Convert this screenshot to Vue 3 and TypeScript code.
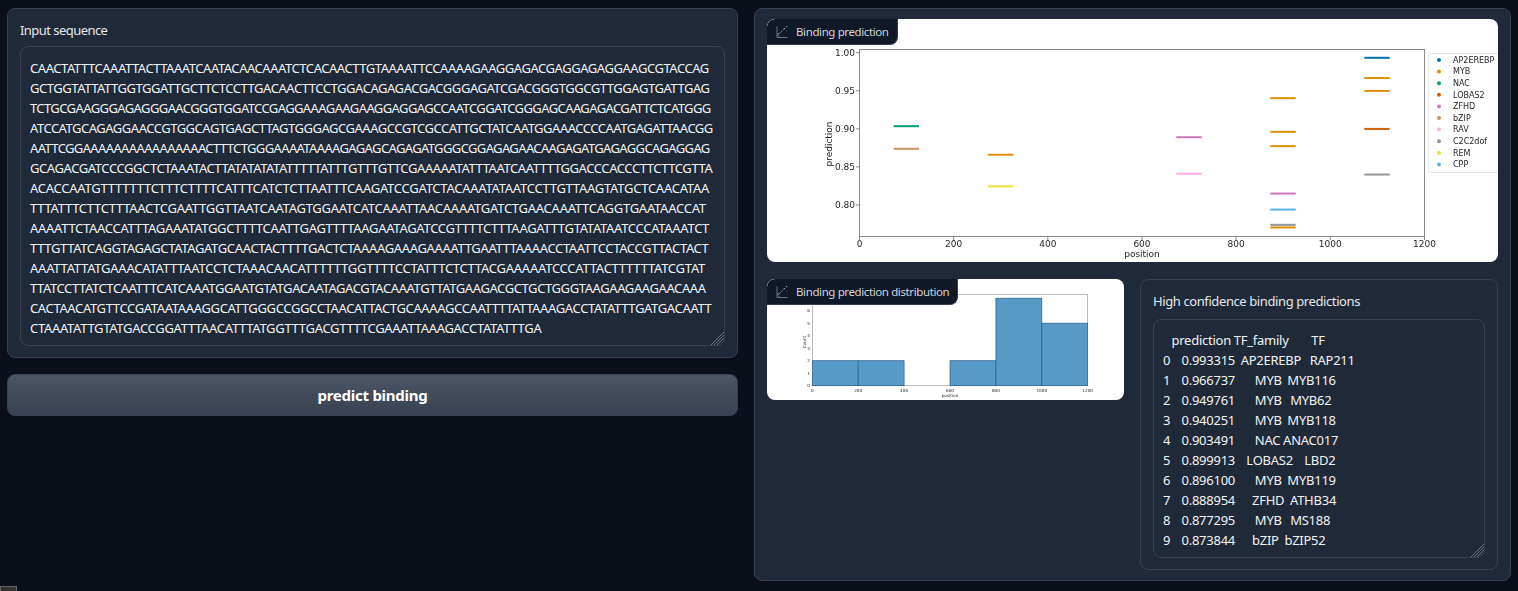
<template>
  <div class="page">
    <div class="col-left">
      <div class="panel seq-panel">
        <label class="field-label" for="seq">Input sequence</label>
        <div class="field-wrap">
          <div id="seq" class="field seq-field" role="textbox" aria-readonly="true">
            <span v-for="l in seqLines" :key="l.text" class="seq-line" :style="{ letterSpacing: l.spacing + 'px' }">{{ l.text }}</span>
          </div>
          <span class="grip" />
        </div>
      </div>
      <button class="predict-btn" type="button">predict binding</button>
    </div>

    <div class="panel col-right">
      <div class="image-block main-plot">
        <div class="block-label">
          <svg class="label-icon" viewBox="0 0 12 12" fill="none" stroke="currentColor" stroke-width="1">
            <path d="M1 .5v11h10.5" />
            <path d="M1 10 6.5 4.5" />
            <path d="M7.5 3.5 9 2M10 1l1.5-1" stroke="#9ca3af" />
            <path d="M3 11.5V9.5M1 7.5h2M7 2.5l1 1M10 4.5l1 1" stroke-width="0.8" />
          </svg>
          <span>Binding prediction</span>
        </div>
        <svg class="plot" viewBox="0 0 731 244" width="731" height="244">
          <g transform="translate(-767 -19)">
            <rect x="859.5" y="49.5" width="565" height="187" fill="none" stroke="#8a8a8a" />
            <g v-for="t in yTicks" :key="t.label">
              <line x1="856" x2="859.5" :y1="t.y" :y2="t.y" stroke="#555" stroke-width="0.7" />
              <text x="855" :y="t.y + 3.3" class="tick" text-anchor="end">{{ t.label }}</text>
            </g>
            <g v-for="t in xTicks" :key="t.label">
              <line :x1="t.x" :x2="t.x" y1="236.5" y2="240" stroke="#555" stroke-width="0.7" />
              <text :x="t.x" y="247" class="tick" text-anchor="middle">{{ t.label }}</text>
            </g>
            <text x="1142" y="257" class="tick" text-anchor="middle">position</text>
            <text class="tick" text-anchor="middle" transform="translate(832 144) rotate(-90)">prediction</text>
            <line
              v-for="(b, i) in bindings"
              :key="i"
              :x1="b.x"
              :x2="b.x + 25.4"
              :y1="b.y"
              :y2="b.y"
              :stroke="b.color"
              stroke-width="2"
            />
            <rect x="1428.5" y="53.5" width="75" height="119" rx="2" fill="#fff" stroke="#e6e6e6" />
            <g v-for="(l, i) in legend" :key="l.name">
              <circle cx="1439" :cy="60 + i * 11.6" r="2" :fill="l.color" />
              <text x="1453" :y="62.7 + i * 11.6" class="tick legend-text">{{ l.name }}</text>
            </g>
          </g>
        </svg>
      </div>

      <div class="bottom-row">
        <div class="image-block dist-plot">
          <div class="block-label">
            <svg class="label-icon" viewBox="0 0 12 12" fill="none" stroke="currentColor" stroke-width="1">
              <path d="M1 .5v11h10.5" />
              <path d="M1 10 6.5 4.5" />
              <path d="M7.5 3.5 9 2M10 1l1.5-1" stroke="#9ca3af" />
              <path d="M3 11.5V9.5M1 7.5h2M7 2.5l1 1M10 4.5l1 1" stroke-width="0.8" />
            </svg>
            <span>Binding prediction distribution</span>
          </div>
          <svg class="plot" viewBox="0 0 357 121" width="357" height="121">
            <g transform="translate(-767 -280)">
              <rect x="812.5" y="295.5" width="275" height="91" fill="none" stroke="#bdbdbd" />
              <rect
                v-for="(h, i) in histogram"
                :key="i"
                :x="812.3 + h.bin * 45.9"
                :y="386.7 - h.count * 12.5"
                width="45.9"
                :height="h.count * 12.5"
                fill="#5799c7"
                stroke="#2a5d80"
                stroke-width="0.7"
              />
              <g v-for="c in 7" :key="c">
                <text x="810" :y="386.7 - (c - 1) * 12.5 + 1.6" class="tiny" text-anchor="end">{{ c - 1 }}</text>
              </g>
              <g v-for="p in 7" :key="p">
                <text :x="812.3 + (p - 1) * 45.9" y="392.5" class="tiny" text-anchor="middle">{{ (p - 1) * 200 }}</text>
              </g>
              <text x="950" y="397.5" class="tiny" text-anchor="middle">position</text>
              <text class="tiny" text-anchor="middle" transform="translate(806 343) rotate(-90)">Count</text>
            </g>
          </svg>
        </div>

        <div class="table-box">
          <label class="field-label" for="preds">High confidence binding predictions</label>
          <div class="field-wrap">
            <textarea id="preds" class="field table-field" readonly :value="predictions" spellcheck="false" />
            <span class="grip" />
          </div>
        </div>
      </div>
    </div>

    <div class="corner-chip" />
  </div>
</template>

<script setup lang="ts">
// each line with the x where it ends in the layout
const sequence: [string, number][] = [
  ['CAACTATTTCAAATTACTTAAATCAATACAACAAATCTCACAACTTGTAAAATTCCAAAAGAAGGAGACGAGGAGAGGAAGCGTACCAG', 709.3],
  ['GCTGGTATTATTGGTGGATTGCTTCTCCTTGACAACTTCCTGGACAGAGACGACGGGAGATCGACGGGTGGCGTTGGAGTGATTGAG', 710],
  ['TCTGCGAAGGGAGAGGGAACGGGTGGATCCGAGGAAAGAAGAAGGAGGAGCCAATCGGATCGGGAGCAAGAGACGATTCTCATGGG', 711.3],
  ['ATCCATGCAGAGGAACCGTGGCAGTGAGCTTAGTGGGAGCGAAAGCCGTCGCCATTGCTATCAATGGAAACCCCAATGAGATTAACGG', 713.3],
  ['AATTCGGAAAAAAAAAAAAAAAACTTTCTGGGAAAATAAAAGAGAGCAGAGATGGGCGGAGAGAACAAGAGATGAGAGGCAGAGGAG', 710.3],
  ['GCAGACGATCCCGGCTCTAAATACTTATATATATATTTTTATTTGTTTGTTCGAAAAATATTTAATCAATTTTGGACCCACCCTTCTTCGTTA', 712.7],
  ['ACACCAATGTTTTTTTCTTTCTTTTCATTTCATCTCTTAATTTCAAGATCCGATCTACAAATATAATCCTTGTTAAGTATGCTCAACATAA', 709.3],
  ['TTTATTTCTTCTTTAACTCGAATTGGTTAATCAATAGTGGAATCATCAAATTAACAAAATGATCTGAACAAATTCAGGTGAATAACCAT', 706],
  ['AAAATTCTAACCATTTAGAAATATGGCTTTTCAATTGAGTTTTAAGAATAGATCCGTTTTCTTTAAGATTTGTATATAATCCCATAAATCT', 709.3],
  ['TTTGTTATCAGGTAGAGCTATAGATGCAACTACTTTTGACTCTAAAAGAAAGAAAATTGAATTTAAAACCTAATTCCTACCGTTACTACT', 708.7],
  ['AAATTATTATGAAACATATTTAATCCTCTAAACAACATTTTTTGGTTTTCCTATTTCTCTTACGAAAAATCCCATTACTTTTTTATCGTAT', 705.3],
  ['TTATCCTTATCTCAATTTCATCAAATGGAATGTATGACAATAGACGTACAAATGTTATGAAGACGCTGCTGGGTAAGAAGAAGAACAAA', 706],
  ['CACTAACATGTTCCGATAATAAAGGCATTGGGCCGGCCTAACATTACTGCAAAAGCCAATTTTATTAAAGACCTATATTTGATGACAATT', 711.8],
  ['CTAAATATTGTATGACCGGATTTAACATTTATGGTTTGACGTTTTCGAAATTAAAGACCTATATTTGA', 541.7],
]

// the line widths differ per font, so fit each one by its letter spacing
const measure = document.createElement('canvas').getContext('2d')
if (measure) measure.font = '13px "Noto Sans"'

const seqLines = sequence.map(([text, end]) => {
  const natural = measure ? measure.measureText(text).width : 0
  const spacing = measure ? (end - 30 - natural) / (text.length - 1) : -0.4
  return { text, spacing }
})

const predictions = [
  '   prediction TF_family        TF',
  '0    0.993315  AP2EREBP   RAP211',
  '1    0.966737       MYB  MYB116',
  '2    0.949761       MYB   MYB62',
  '3    0.940251       MYB  MYB118',
  '4    0.903491       NAC ANAC017',
  '5    0.899913    LOBAS2    LBD2',
  '6    0.896100       MYB  MYB119',
  '7    0.888954      ZFHD  ATHB34',
  '8    0.877295       MYB   MS188',
  '9    0.873844      bZIP  bZIP52',
].join('\n')

const palette = {
  AP2EREBP: '#0173b2',
  MYB: '#de8f05',
  NAC: '#029e73',
  LOBAS2: '#d55e00',
  ZFHD: '#cc78bc',
  bZIP: '#ca9161',
  RAV: '#fbafe4',
  C2C2dof: '#949494',
  REM: '#ece133',
  CPP: '#56b4e9',
}

const legend = Object.entries(palette).map(([name, color]) => ({ name, color }))

const toY = (v: number) => 52.7 + (1 - v) * 761.5

const yTicks = [1, 0.95, 0.9, 0.85, 0.8].map((v) => ({ label: v.toFixed(2), y: toY(v) }))
const xTicks = [0, 200, 400, 600, 800, 1000, 1200].map((v) => ({ label: String(v), x: 859.5 + v * 0.4708 }))

// start position (px), y value, family
const rawBindings: [number, number, keyof typeof palette][] = [
  [893.7, 0.9035, 'NAC'],
  [893.7, 0.8738, 'bZIP'],
  [988, 0.866, 'MYB'],
  [988, 0.8245, 'REM'],
  [1176.3, 0.889, 'ZFHD'],
  [1176.3, 0.841, 'RAV'],
  [1270.3, 0.9403, 'MYB'],
  [1270.3, 0.8961, 'MYB'],
  [1270.3, 0.8773, 'MYB'],
  [1270.3, 0.815, 'ZFHD'],
  [1270.3, 0.794, 'CPP'],
  [1270.3, 0.774, 'C2C2dof'],
  [1270.3, 0.7705, 'MYB'],
  [1364.3, 0.9933, 'AP2EREBP'],
  [1364.3, 0.9667, 'MYB'],
  [1364.3, 0.9498, 'MYB'],
  [1364.3, 0.8999, 'LOBAS2'],
  [1364.3, 0.84, 'C2C2dof'],
]

const bindings = rawBindings.map(([x, v, family]) => ({ x, y: toY(v), color: palette[family] }))

const histogram = [
  { bin: 0, count: 2 },
  { bin: 1, count: 2 },
  { bin: 3, count: 2 },
  { bin: 4, count: 7 },
  { bin: 5, count: 5 },
]
</script>

<style>
html,
body {
  margin: 0;
  background: #0b0f19;
  overflow: hidden;
}
</style>

<style scoped>
.page {
  position: relative;
  height: 591px;
  box-sizing: border-box;
  padding: 8px 7px 10px;
  display: grid;
  grid-template-columns: 731px 757px;
  gap: 16px;
  background: #0b0f19;
  color: #f3f4f6;
  font-family: "Noto Sans", sans-serif;
  font-size: 13px;
  letter-spacing: -0.4px;
  overflow: hidden;
}

.col-left {
  display: flex;
  flex-direction: column;
  gap: 16px;
  align-items: stretch;
}

.panel {
  background: #1f2937;
  border: 1px solid #374151;
  border-radius: 8px;
  box-sizing: border-box;
}

.seq-panel {
  height: 350px;
  padding: 11px 12px;
  display: flex;
  flex-direction: column;
}

.seq-panel .field-label {
  height: 27px;
  letter-spacing: -0.55px;
}

.field-label {
  display: block;
  height: 28px;
  line-height: 20px;
  color: #e5e7eb;
}

.field-wrap {
  position: relative;
}

.field {
  display: block;
  width: 100%;
  box-sizing: border-box;
  margin: 0;
  background: #1f2937;
  border: 1px solid #374151;
  border-radius: 8px;
  color: #f3f4f6;
  font: inherit;
  letter-spacing: inherit;
  line-height: 20px;
  white-space: pre;
  overflow: hidden;
  resize: none;
  outline: none;
}

.seq-field {
  height: 300px;
  padding: 11px 9px 7px;
}

.seq-line {
  display: block;
  height: 20px;
}

.table-field {
  height: 239px;
  padding: 10px 9px 7px;
  letter-spacing: -0.25px;
  word-spacing: -0.3px;
}

/* resize handle, same hatch on both text fields */
.grip {
  position: absolute;
  right: 1px;
  bottom: 1px;
  width: 14px;
  height: 14px;
  background: repeating-linear-gradient(135deg, transparent 0 1.5px, #6b7280 1.5px 2.2px);
  clip-path: polygon(100% 0, 100% 100%, 0 100%);
  border-bottom-right-radius: 7px;
}

.predict-btn {
  height: 42px;
  border: 1px solid #374151;
  border-radius: 8px;
  background: linear-gradient(to bottom, #4b5563, #374151);
  color: #fff;
  font: inherit;
  font-size: 15px;
  font-weight: 700;
  letter-spacing: -0.25px;
}

.col-right {
  height: 573px;
  padding: 10px 12px;
  display: flex;
  flex-direction: column;
  gap: 17px;
}

.image-block {
  position: relative;
  background: #fff;
  border-radius: 8px;
  overflow: hidden;
}

.main-plot {
  height: 244px;
}

.dist-plot {
  width: 357px;
  height: 121px;
}

.plot {
  display: block;
  filter: blur(0.25px);
}

.tick {
  font-family: "DejaVu Sans", sans-serif;
  font-size: 9px;
  letter-spacing: 0;
  fill: #262626;
}

.legend-text {
  font-size: 8px;
}

.tiny {
  font-family: "DejaVu Sans", sans-serif;
  font-size: 4.2px;
  letter-spacing: 0;
  fill: #222;
}

.block-label {
  position: absolute;
  top: 0;
  left: 0;
  z-index: 1;
  height: 26px;
  padding: 0 8px 0 9px;
  display: flex;
  align-items: center;
  gap: 8px;
  background: #111827;
  border: 1px solid #374151;
  border-width: 0 1px 1px 0;
  border-radius: 8px 0 8px 0;
  color: #d1d5db;
  font-size: 11.5px;
  letter-spacing: -0.39px;
  box-sizing: border-box;
}

.label-icon {
  width: 12px;
  height: 12px;
  color: #6b7280;
}

.bottom-row {
  display: grid;
  grid-template-columns: 357px 358px;
  gap: 16px;
  align-items: start;
}

.table-box {
  box-sizing: border-box;
  height: 291px;
  padding: 11px 12px;
  background: #1f2937;
  border: 1px solid #374151;
  border-radius: 8px;
}

.corner-chip {
  position: absolute;
  left: 0;
  top: 586px;
  width: 17px;
  height: 8px;
  box-sizing: border-box;
  background: #333;
  border: 1px solid #666;
}
</style>
